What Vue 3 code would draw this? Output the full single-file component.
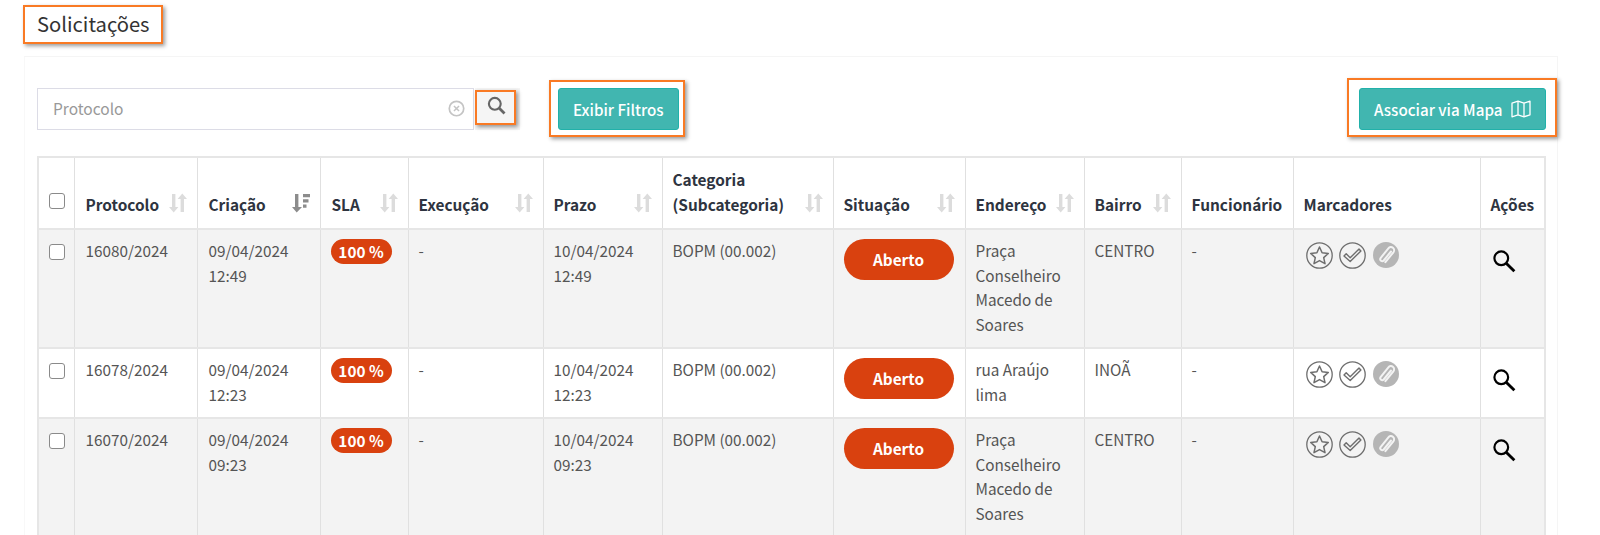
<script setup>
import { ref } from 'vue'

const columns = ref([
  { label: 'Protocolo', sort: true, width: 123 },
  { label: 'Criação', sort: true, active: true, width: 123 },
  { label: 'SLA', sort: true, width: 88 },
  { label: 'Execução', sort: true, width: 135 },
  { label: 'Prazo', sort: true, width: 119 },
  { label: 'Categoria (Subcategoria)', sort: true, width: 171 },
  { label: 'Situação', sort: true, width: 132 },
  { label: 'Endereço', sort: true, width: 119 },
  { label: 'Bairro', sort: true, width: 97 },
  { label: 'Funcionário', width: 112 },
  { label: 'Marcadores', width: 187 },
  { label: 'Ações', width: 65 }
])

const rows = ref([
  { protocolo: '16080/2024', criacao: '09/04/2024 12:49', prazo: '10/04/2024 12:49', endereco: 'Praça Conselheiro Macedo de Soares', bairro: 'CENTRO' },
  { protocolo: '16078/2024', criacao: '09/04/2024 12:23', prazo: '10/04/2024 12:23', endereco: 'rua Araújo lima', bairro: 'INOÃ' },
  { protocolo: '16070/2024', criacao: '09/04/2024 09:23', prazo: '10/04/2024 09:23', endereco: 'Praça Conselheiro Macedo de Soares', bairro: 'CENTRO' }
])
</script>

<template>
  <div class="page">
    <div class="title-box">
      <h1>Solicitações</h1>
    </div>

    <section class="panel">
      <div class="toolbar">
        <div class="search">
          <div class="search-input">
            <span class="placeholder">Protocolo</span>
            <svg class="clear" viewBox="0 0 16 16" width="17" height="17" fill="none" stroke="#c4c4c4">
              <circle cx="8" cy="8" r="6.8" stroke-width="1.6" />
              <path d="M5.6 5.6l4.8 4.8M10.4 5.6l-4.8 4.8" stroke-width="1.4" />
            </svg>
          </div>
          <button class="search-btn">
            <svg viewBox="0 0 18 18" width="19" height="19" fill="none" stroke="#666">
              <circle cx="7.4" cy="7.4" r="5.6" stroke-width="2" />
              <path d="M11.4 11.4l5.2 5.2" stroke-width="2.6" />
            </svg>
            <span class="mark mark-search"></span>
          </button>
        </div>
        <button class="btn btn-filter">
          Exibir Filtros
          <span class="mark"></span>
        </button>
        <button class="btn btn-map">
          Associar via Mapa
          <svg viewBox="0 0 20 18" width="20" height="18" fill="none" stroke="#fff" stroke-width="1.3" stroke-linejoin="round">
            <path d="M1 3.2l6-2 6 2 6-2v13.6l-6 2-6-2-6 2z" />
            <path d="M7 1.2v13.6M13 3.2v13.6" />
          </svg>
          <span class="mark mark-map"></span>
        </button>
      </div>

      <table class="grid">
        <colgroup>
          <col style="width: 36px" />
          <col v-for="col in columns" :key="col.label" :style="{ width: col.width + 'px' }" />
        </colgroup>
        <thead>
          <tr>
            <th class="check-cell"><span class="check"></span></th>
            <th v-for="col in columns" :key="col.label">
              <div class="th-inner">
                <span>{{ col.label }}</span>
                <svg v-if="col.sort && col.active" class="sort" viewBox="0 0 18 20" width="18" height="20" fill="#8c8c8c">
                  <path d="M3 1h3.400v13H10l-5.300 5.500L0 14h3z" />
                  <path d="M11 1h7v3.200h-7zM11 6.300h5.500v3.200H11zM11 11.600h3.500v3.200H11z" />
                </svg>
                <svg v-else-if="col.sort" class="sort" viewBox="0 0 18 20" width="18" height="20" fill="#dcdcdc">
                  <path d="M3 1h3.400v13H9.400l-4.700 5.500L0 14h3z" />
                  <path d="M11.600 19H15V6h3L13.300 .5 8.600 6h3z" />
                </svg>
              </div>
            </th>
          </tr>
        </thead>
        <tbody>
          <tr v-for="row in rows" :key="row.protocolo">
            <td class="check-cell"><span class="check"></span></td>
            <td>{{ row.protocolo }}</td>
            <td>{{ row.criacao }}</td>
            <td class="sla-cell"><span class="sla">100 %</span></td>
            <td>-</td>
            <td>{{ row.prazo }}</td>
            <td>BOPM (00.002)</td>
            <td class="status-cell"><span class="status">Aberto</span></td>
            <td>{{ row.endereco }}</td>
            <td>{{ row.bairro }}</td>
            <td>-</td>
            <td>
              <div class="markers">
                <svg viewBox="0 0 27 27" width="27" height="27" fill="none" stroke="#6e6e6e">
                  <circle cx="13.500" cy="13.500" r="12.700" stroke-width="1.300" />
                  <path d="M13.500 5l2.600 5.700 6.200.7-4.600 4.200 1.300 6.100-5.500-3.100-5.500 3.100 1.300-6.100-4.600-4.200 6.200-.7z" stroke-width="1.500" stroke-linejoin="round" />
                </svg>
                <svg viewBox="0 0 27 27" width="27" height="27" fill="none" stroke="#6e6e6e">
                  <circle cx="13.500" cy="13.500" r="12.700" stroke-width="1.300" />
                  <path d="M5 14l2.200-2.200 4 4L20 7l1.900 1.900-10.700 10.700z" stroke-width="1.400" stroke-linejoin="round" />
                </svg>
                <svg viewBox="0 0 26 26" width="26" height="26">
                  <circle cx="13" cy="13" r="13" fill="#b5b5b5" />
                  <path d="M18 9.500l-7.300 9a2 2 0 0 1-3.100-2.500l7.800-9.700a3.200 3.200 0 0 1 5 4l-8 9.900" fill="none" stroke="#f3f3f3" stroke-width="2" stroke-linecap="round" />
                </svg>
              </div>
            </td>
            <td>
              <svg class="view" viewBox="0 0 22 22" width="24" height="24" fill="none" stroke="#000">
                <circle cx="8.500" cy="8.500" r="6.300" stroke-width="2" />
                <path d="M13 13l7.500 7.500" stroke-width="2.600" />
              </svg>
            </td>
          </tr>
        </tbody>
      </table>
    </section>
  </div>
</template>

<style>
html,
body {
  height: 535px;
  overflow: hidden;
  background: #fff;
}
</style>

<style scoped>
.page {
  font-family: "Noto Sans CJK SC", "Noto Sans", sans-serif;
  font-size: 15.3px;
  color: #555;
  padding: 5px 41px 0 24px;
}

.title-box {
  display: inline-block;
  border: 2px solid #f97a24;
  box-shadow: 2px 2px 4px rgba(0, 0, 0, 0.4);
  padding: 0 11px 0 12px;
  height: 39px;
  box-sizing: border-box;
  margin-left: -1px;
  margin-bottom: 12px;
  vertical-align: top;
}

.title-box h1 {
  margin: 0;
  font-size: 20.2px;
  font-weight: 400;
  line-height: 33px;
  color: #333;
}

.panel {
  width: 1534px;
  box-sizing: border-box;
  border-top: 1px solid #f5f5f5;
  border-left: 1px solid #f8f8f8;
  border-right: 1px solid #f5f5f5;
  padding: 31px 12px 0 12px;
}

.toolbar {
  display: flex;
  align-items: stretch;
  height: 42px;
  margin-bottom: 26px;
}

.search {
  display: flex;
}

.search-input {
  width: 437px;
  box-sizing: border-box;
  border: 1px solid #dcdce6;
  display: flex;
  align-items: center;
  justify-content: space-between;
  padding: 0 8px 2px 15px;
}

.placeholder {
  color: #999;
  font-size: 15.5px;
}

.search-btn {
  position: relative;
  width: 45px;
  margin-left: 1px;
  padding: 0 3px 5px 0;
  border: none;
  background: #f5f5f5;
}

.btn {
  position: relative;
  display: flex;
  align-items: center;
  gap: 8px;
  box-sizing: border-box;
  border: 1px solid #21b1aa;
  border-radius: 3px;
  background: #41b6b0;
  color: #fff;
  font-family: inherit;
  font-size: 15.2px;
  font-weight: 500;
}

.btn svg {
  flex: none;
}

.btn-filter {
  margin-left: 38px;
  padding: 0 14px;
  width: 121px;
  white-space: nowrap;
}

.btn-map {
  margin-left: auto;
  margin-right: -1px;
  width: 187px;
  padding: 0 14px;
  white-space: nowrap;
}

.mark {
  position: absolute;
  inset: -9px -7px -8px -10px;
  border: 2px solid #f97a24;
  box-shadow: 2px 2px 4px rgba(0, 0, 0, 0.4);
  pointer-events: none;
}

.mark-search {
  inset: 2px 4px 5px 0;
}

.mark-map {
  inset: -11px -12px -8px -13px;
}

.grid {
  width: 1507px;
  table-layout: fixed;
  border-collapse: collapse;
  border: 2px solid #e6e6e6;
}

.grid th,
.grid td {
  border: 1px solid #e0e0e0;
  padding: 8px 10px 11px;
  line-height: 24.5px;
  vertical-align: top;
  text-align: left;
}

.grid th:nth-child(-n + 4),
.grid td:nth-child(-n + 4) {
  padding-left: 11px;
}

.grid th {
  vertical-align: bottom;
  font-size: 15.4px;
  font-weight: 600;
  color: #2e3440;
  border-bottom: 2px solid #e6e6e6;
  padding-top: 9px;
  padding-bottom: 12px;
}

.th-inner {
  display: flex;
  align-items: flex-end;
  justify-content: space-between;
}

.sort {
  flex: none;
  margin-bottom: 3px;
}

.grid tbody tr:nth-child(odd) {
  background: #f3f3f3;
}

.grid tbody td {
  border-bottom: 2px solid #e6e6e6;
}

.check {
  display: block;
  width: 16px;
  height: 16px;
  box-sizing: border-box;
  border: 1.500px solid #8a8a8a;
  border-radius: 3px;
  background: #fff;
  margin-top: 6px;
}

.grid th.check-cell .check {
  margin: 0 0 7px;
}

.grid th.check-cell,
.grid td.check-cell {
  padding-right: 0;
  padding-left: 10px;
}

.sla {
  display: block;
  width: 61px;
  height: 25px;
  line-height: 24px;
  margin: 1px 0 0 -1px;
  border-radius: 13px;
  background: #d9410f;
  color: #fff;
  font-weight: 700;
  text-align: center;
}

.status {
  display: block;
  height: 41px;
  line-height: 40px;
  margin: 1px 1px 0 0;
  border-radius: 21px;
  background: #d9410f;
  color: #fff;
  font-weight: 700;
  text-align: center;
}

.markers {
  display: flex;
  gap: 6.500px;
  align-items: flex-start;
  margin: 4px 0 0 2px;
}

.view {
  display: block;
  margin-top: 11px;
  margin-left: 1px;
}
</style>
